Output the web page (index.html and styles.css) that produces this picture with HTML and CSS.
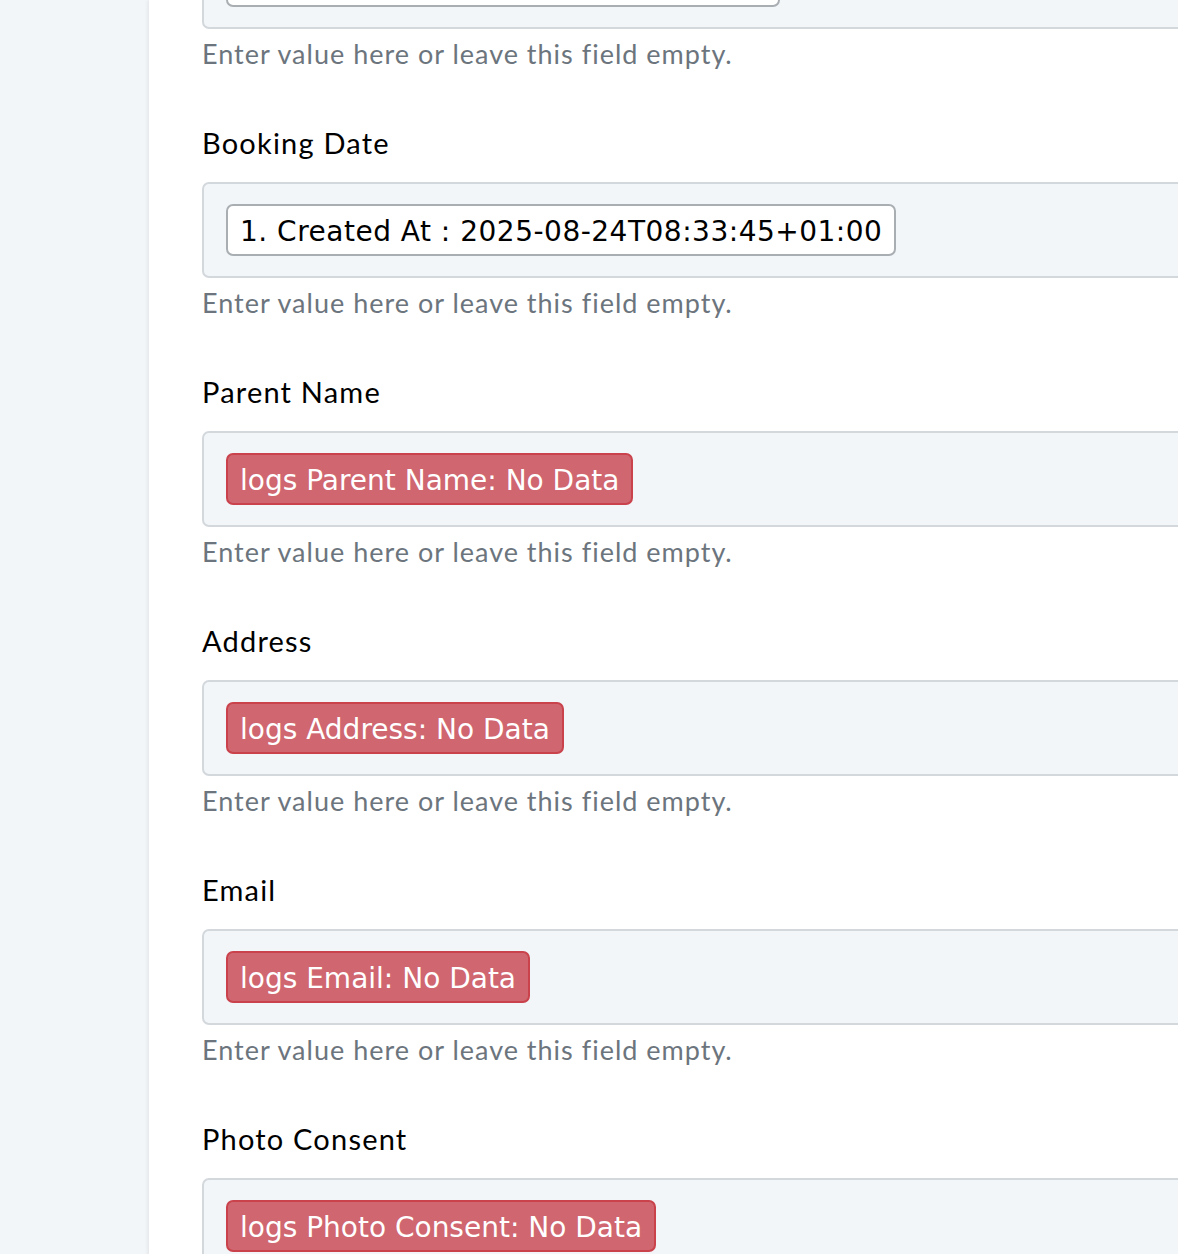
FILE: index.html
```html
<!DOCTYPE html>
<html lang="en">
<head>
<meta charset="utf-8">
<title>Form</title>
<link rel="stylesheet" href="styles.css">
</head>
<body>
<div class="layout">
  <aside class="sidebar"></aside>
  <main class="main">
    <div class="form">
      <div class="group first">
        <div class="box"><span class="chip chip-plain chip-wide">&nbsp;</span></div>
        <div class="help">Enter value here or leave this field empty.</div>
      </div>
      <div class="group">
        <div class="label">Booking Date</div>
        <div class="box"><span class="chip chip-plain">1. Created At : 2025-08-24T08:33:45+01:00</span></div>
        <div class="help">Enter value here or leave this field empty.</div>
      </div>
      <div class="group">
        <div class="label">Parent Name</div>
        <div class="box"><span class="chip chip-red">logs Parent Name: No Data</span></div>
        <div class="help">Enter value here or leave this field empty.</div>
      </div>
      <div class="group">
        <div class="label">Address</div>
        <div class="box"><span class="chip chip-red">logs Address: No Data</span></div>
        <div class="help">Enter value here or leave this field empty.</div>
      </div>
      <div class="group">
        <div class="label">Email</div>
        <div class="box"><span class="chip chip-red">logs Email: No Data</span></div>
        <div class="help">Enter value here or leave this field empty.</div>
      </div>
      <div class="group">
        <div class="label">Photo Consent</div>
        <div class="box"><span class="chip chip-red">logs Photo Consent: No Data</span></div>
        <div class="help">Enter value here or leave this field empty.</div>
      </div>
    </div>
  </main>
</div>
</body>
</html>
```
FILE: styles.css
```css
html, body {
  margin: 0;
  padding: 0;
  height: 100%;
  overflow: hidden;
}
body {
  background: #f3f6f9;
  font-family: "Lato", "Noto Sans", sans-serif;
}
.layout {
  display: flex;
  min-height: 100%;
}
.sidebar {
  width: 149px;
  flex: 0 0 149px;
}
.main {
  flex: 1 1 auto;
  background: #ffffff;
  box-shadow: -1px 0 4px rgba(0, 0, 0, 0.08);
  padding-left: 53px;
  overflow: hidden;
}
.form {
  width: 1200px;
}
.group {
  margin-bottom: 53px;
}
.group.first {
  margin-top: -67px;
}
.label {
  font-size: 29px;
  letter-spacing: 1.2px;
  line-height: 36px;
  height: 36px;
  color: #000;
  margin-bottom: 21px;
}
.box {
  box-sizing: border-box;
  height: 96px;
  border: 2px solid #d3d8dd;
  border-radius: 7px;
  background: #f3f6f9;
  padding: 20px 22px;
  display: flex;
  align-items: center;
}
.help {
  margin-top: 7px;
  font-size: 27px;
  letter-spacing: 1px;
  line-height: 36px;
  height: 36px;
  color: #6c757d;
}
.chip {
  box-sizing: border-box;
  height: 52px;
  display: inline-flex;
  align-items: center;
  padding: 2px 12px 0;
  border-radius: 7px;
  font-family: "DejaVu Sans", "Verdana", sans-serif;
  font-size: 28px;
  white-space: nowrap;
}
.chip-plain {
  background: #ffffff;
  border: 2px solid #a9aeb3;
  color: #000;
  letter-spacing: 0.5px;
}
.chip-wide {
  width: 554px;
}
.chip-red {
  background: #d0666f;
  border: 2px solid #c9424c;
  color: #ffffff;
}
```
